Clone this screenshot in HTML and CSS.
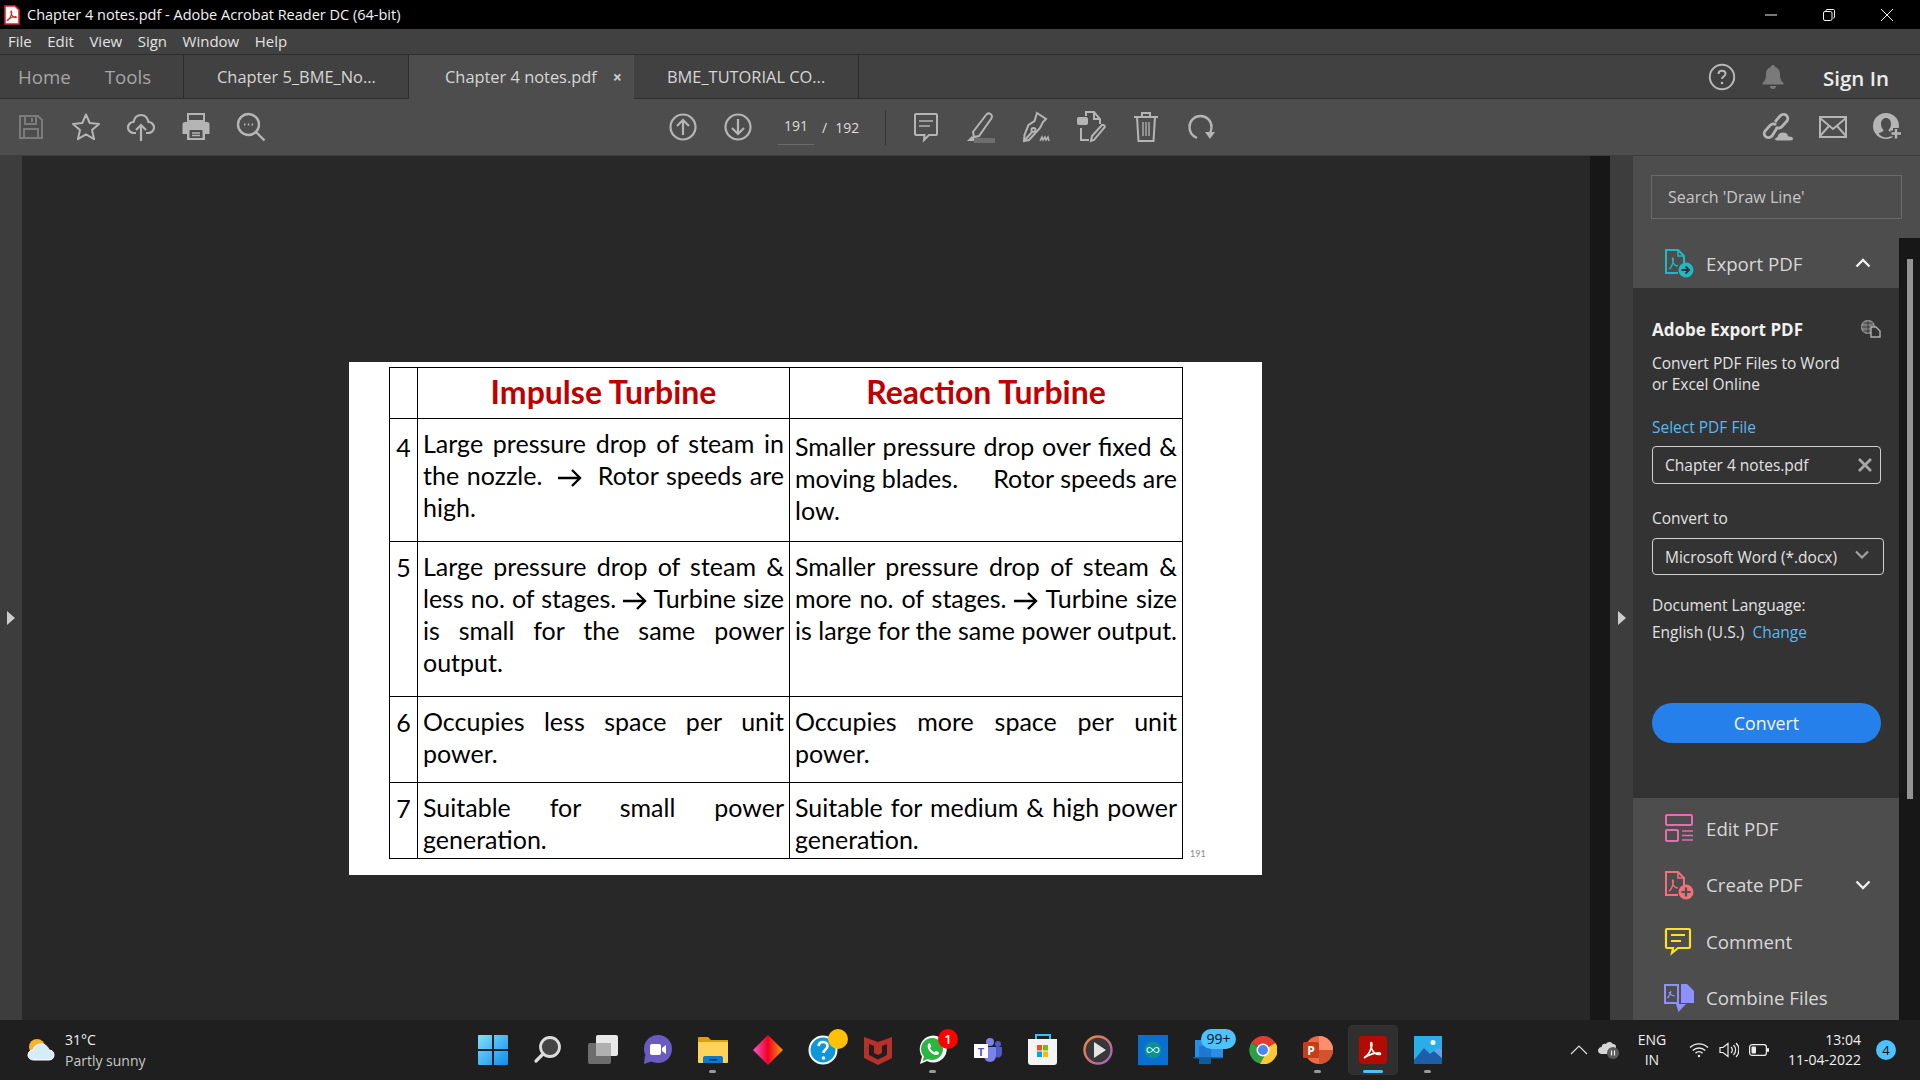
FILE: index.html
```html
<!DOCTYPE html>
<html lang="en">
<head>
<meta charset="utf-8">
<title>Chapter 4 notes.pdf - Adobe Acrobat Reader DC (64-bit)</title>
<link rel="stylesheet" href="styles.css">
</head>
<body>
<div class="app">
  <header class="titlebar">
    <svg class="app-icon" viewBox="0 0 16 20" width="16" height="20"><path d="M1 1h10l4 4v14H1z" fill="#fff" stroke="#e0222a" stroke-width="1.6"/><path d="M3.5 15.5c2-1 3-3.5 4-6.5.4-1.5.3-3-.2-3-.6 0-.5 2 .3 3.6.8 1.800 2 3 4 3 1.200 0 1-1-.4-1-2 0-4.500 1-6.500 2.400-1.400 1-1.800 1.500-1.200 1.500z" fill="none" stroke="#e0222a" stroke-width="1.100"/></svg>
    <span class="title-text">Chapter 4 notes.pdf - Adobe Acrobat Reader DC (64-bit)</span>
    <div class="win-controls">
      <svg width="14" height="14" viewBox="0 0 14 14"><path d="M1 7h12" stroke="#fff" stroke-width="1"/></svg>
      <svg width="14" height="14" viewBox="0 0 14 14"><rect x="1.500" y="3.500" width="8.500" height="9" rx="1.500" fill="none" stroke="#fff"/><path d="M4 3V2.500C4 1.700 4.500 1.500 5 1.500h6.500c.6 0 1 .4 1 1V9c0 .7-.5 1-1.500 1" fill="none" stroke="#fff"/></svg>
      <svg width="14" height="14" viewBox="0 0 14 14"><path d="M1 1l12 12M13 1L1 13" stroke="#fff" stroke-width="1"/></svg>
    </div>
  </header>

  <nav class="menubar">
    <span>File</span><span>Edit</span><span>View</span><span>Sign</span><span>Window</span><span>Help</span>
  </nav>

  <div class="tabbar">
    <div class="tab-home"><span>Home</span><span>Tools</span></div>
    <div class="tab tab-a">Chapter 5_BME_No...</div>
    <div class="tab tab-active">Chapter 4 notes.pdf<span class="tab-close">×</span></div>
    <div class="tab tab-c">BME_TUTORIAL CO...</div>
    <div class="tab-right">
      <svg width="28" height="28" viewBox="0 0 28 28"><circle cx="14" cy="14" r="12.200" fill="none" stroke="#b8b8b8" stroke-width="2"/><path d="M10.500 11c0-2 1.500-3.200 3.500-3.200s3.500 1.200 3.500 3c0 2.700-3.500 2.700-3.500 5.200" fill="none" stroke="#b8b8b8" stroke-width="2"/><circle cx="14" cy="20" r="1.300" fill="#b8b8b8"/></svg>
      <svg width="24" height="26" viewBox="0 0 24 26"><path d="M12 1c1.300 0 2 .9 2 2 3.500 1 5 4 5 7.500 0 4 1 6.500 3.500 8.500v1.500h-21V19C4 17 5 14.500 5 10.500 5 7 6.500 4 10 3c0-1.100.7-2 2-2z" fill="#7a7a7a"/><path d="M9 22h6c0 1.700-1.300 3-3 3s-3-1.300-3-3z" fill="#7a7a7a"/></svg>
      <span class="signin">Sign In</span>
    </div>
  </div>

  <div class="toolbar">
    <div class="tool-group">
      <span class="tool"><svg width="26" height="26" viewBox="0 0 26 26" fill="none" stroke="#7b7b7b" stroke-width="2"><path d="M2 2h18l4 4v18H2z"/><path d="M7 2v8h11V2M14 4v4M6 24v-9h14v9"/></svg></span>
      <span class="tool"><svg width="30" height="30" viewBox="0 0 30 30" fill="none" stroke="#b5b5b5" stroke-width="2"><path d="M15 2.500l3.700 8.500 9.300.9-7 6.100 2.100 9.100-8.100-4.800-8.100 4.800 2.100-9.100-7-6.100 9.300-.9z" stroke-linejoin="round"/></svg></span>
      <span class="tool"><svg width="30" height="30" viewBox="0 0 30 30" fill="none" stroke="#b5b5b5" stroke-width="2.200"><path d="M10 21H8c-3.500 0-6-2.500-6-5.500S4.500 10 7.500 10C8.500 5.500 11.500 3 15 3s6.500 2.500 7.500 7c3 0 5.500 2.500 5.500 5.500S25.500 21 22 21h-2"/><path d="M15 29V13M10 18l5-5 5 5"/></svg></span>
      <span class="tool"><svg width="28" height="28" viewBox="0 0 28 28"><path d="M6 1h16v7H6z" fill="none" stroke="#b5b5b5" stroke-width="2"/><path d="M3 9h22a2.500 2.500 0 0 1 2.500 2.500V21H23v6H5v-6H.5v-9.500A2.500 2.500 0 0 1 3 9z" fill="#b5b5b5"/><path d="M7.500 17h13v8h-13z" fill="#4d4d4d"/><path d="M10 20h8M10 22.500h8" stroke="#b5b5b5" stroke-width="1.500"/></svg></span>
      <span class="tool"><svg width="30" height="30" viewBox="0 0 30 30" fill="none" stroke="#b5b5b5" stroke-width="2.400"><circle cx="12.500" cy="12.500" r="10.500"/><path d="M20 20l8.500 8.500"/><path d="M8 12.500h1.500M11.800 12.500h1.500M15.600 12.500h1.500" stroke-width="2"/></svg></span>
    </div>
    <div class="tool-group nav-group">
      <span class="tool"><svg width="28" height="32" viewBox="0 0 28 32" fill="none" stroke="#b5b5b5" stroke-width="2.200"><circle cx="14" cy="16" r="12.500"/><path d="M14 24V9M8 15l6-6 6 6"/></svg></span>
      <span class="tool"><svg width="28" height="32" viewBox="0 0 28 32" fill="none" stroke="#b5b5b5" stroke-width="2.200"><circle cx="14" cy="16" r="12.500"/><path d="M14 8v15M8 17l6 6 6-6"/></svg></span>
      <div class="pager"><span class="page-now">191</span><span class="page-sep">/</span><span>192</span></div>
      <span class="divider"></span>
    </div>
    <div class="tool-group edit-group">
      <span class="tool"><svg width="26" height="32" viewBox="0 0 26 32" fill="none" stroke="#b5b5b5" stroke-width="2"><path d="M3 3h20a2 2 0 0 1 1 1v19a1 1 0 0 1-1 1h-7l-5 5 .5-5H3a1 1 0 0 1-1-1V4a1 1 0 0 1 1-1z"/><path d="M6 10h14M6 15h11" stroke-width="1.600"/></svg></span>
      <span class="tool"><svg width="30" height="32" viewBox="0 0 30 32" fill="none" stroke="#b5b5b5" stroke-width="2"><path d="M7 21L20 4c1.500-2 3-2 4.500-1s2 2.500.8 4.500L13 25l-5 1z"/><path d="M1 30l5-5 3 3-1 2z" fill="#b5b5b5" stroke="none"/><rect x="8" y="27" width="21" height="5" fill="#6e6e6e" stroke="none"/></svg></span>
      <span class="tool"><svg width="30" height="32" viewBox="0 0 30 32" fill="none" stroke="#b5b5b5" stroke-width="2"><path d="M16 2l9 6-3 3-3 6-11 12-5 1 .500-6 4-10 6-4z"/><path d="M3 30l8-9"/><circle cx="12.500" cy="19" r="2" /><path d="M19 30l2-4 1 3 2-3 1 3 2-3 1 4" stroke-width="1.500"/></svg></span>
      <span class="tool"><svg width="30" height="34" viewBox="0 0 30 34" fill="none" stroke="#b5b5b5" stroke-width="2"><path d="M10 6V2h8l6 7v5"/><path d="M18 2v7h6"/><rect x="1" y="7" width="11" height="8" rx="2" fill="#b5b5b5" stroke="none"/><path d="M5 18v12h8"/><path d="M15 31l1-5 10-11c1-1 3.500 1 2.500 2.500L18 30z"/></svg></span>
      <span class="tool"><svg width="26" height="32" viewBox="0 0 26 32" fill="none" stroke="#b5b5b5" stroke-width="2"><path d="M1 6h24M9 6V2h8v4"/><path d="M4 6l1.500 24h15L22 6"/><path d="M10 11v14M13 11v14M16 11v14" stroke-width="1.300"/></svg></span>
      <span class="tool"><svg width="30" height="32" viewBox="0 0 30 32" fill="none" stroke="#b5b5b5" stroke-width="2.400"><path d="M11 27C6 25 3.500 21 3.500 16c0-6.500 5-11 11-11s11 4.500 11 11c0 2.500-.5 4-1.500 6"/><path d="M19 21h10l-5 7z" fill="#b5b5b5" stroke="none"/></svg></span>
    </div>
    <div class="tool-group right-group">
      <span class="tool"><svg width="32" height="30" viewBox="0 0 32 30" fill="none" stroke="#b5b5b5" stroke-width="2.800"><path d="M13 10l5-6c2-2 5-2 6.500-.5s2 4 0 6l-4.500 5c-2 2-4.500 2-6 .5"/><path d="M15 16l-5 8c-2 2-5 2-6.500.5s-2-4 0-6l4.500-5c2-2 4.500-2 6-.5"/><path d="M15 29c-3 0-3-4 0-4 .5-3 3-5 6-5 3.500 0 5 2 5.500 4 3 0 5 1 5 2.500S30 29 28 29z" fill="#b5b5b5" stroke="#4d4d4d" stroke-width="1"/></svg></span>
      <span class="tool"><svg width="28" height="22" viewBox="0 0 28 22" fill="none" stroke="#b5b5b5" stroke-width="2"><rect x="1" y="1" width="26" height="20"/><path d="M1 2l13 11L27 2M1 20l9-10M27 20l-9-10"/></svg></span>
      <span class="tool"><svg width="30" height="28" viewBox="0 0 30 28"><circle cx="13" cy="13" r="13" fill="#b5b5b5"/><path d="M13 5c3 0 5 2.500 5 6 0 2.500-1 4.500-2.500 6 0 1.500 2 2 5 3.500-2 2.500-5 4-7.500 4s-5.500-1.500-7.500-4c3-1.500 5-2 5-3.500-1.500-1.500-2.500-3.500-2.500-6 0-3.500 2-6 5-6z" fill="#4d4d4d"/><path d="M23 15v11M17.500 20.500h11" stroke="#4d4d4d" stroke-width="6"/><path d="M23 16v9.500M18.500 20.500H28" stroke="#b5b5b5" stroke-width="2.400"/></svg></span>
    </div>
  </div>

  <main class="workspace">
    <div class="side-strip"><span class="arrow"></span></div>
    <section class="doc-area">
      <article class="page">
        <table class="sheet">
          <colgroup><col class="col-n"><col class="col-l"><col class="col-r"></colgroup>
          <tr class="row-h">
            <td></td>
            <td class="head">Impulse Turbine</td>
            <td class="head">Reaction Turbine</td>
          </tr>
          <tr class="row-4">
            <td class="num num-low">4</td>
            <td class="txt"><div class="j">Large pressure drop of steam in</div><div class="j">the nozzle. <svg class="arr arr-wide" viewBox="0 0 24 18"><path d="M0 9h22M14 1l8 8-8 8" fill="none" stroke="#000" stroke-width="2.400"/></svg> Rotor speeds are</div><div>high.</div></td>
            <td class="txt low"><div class="j">Smaller pressure drop over fixed &amp;</div><div class="j">moving blades. <span class="gap"></span> Rotor speeds are</div><div>low.</div></td>
          </tr>
          <tr class="row-5">
            <td class="num">5</td>
            <td class="txt"><div class="j">Large pressure drop of steam &amp;</div><div class="j">less no. of stages. <svg class="arr" viewBox="0 0 24 18"><path d="M0 9h22M14 1l8 8-8 8" fill="none" stroke="#000" stroke-width="2.400"/></svg> Turbine size</div><div class="j">is small for the same power</div><div>output.</div></td>
            <td class="txt"><div class="j">Smaller pressure drop of steam &amp;</div><div class="j">more no. of stages. <svg class="arr" viewBox="0 0 24 18"><path d="M0 9h22M14 1l8 8-8 8" fill="none" stroke="#000" stroke-width="2.400"/></svg> Turbine size</div><div class="j">is large for the same power output.</div></td>
          </tr>
          <tr class="row-6">
            <td class="num">6</td>
            <td class="txt"><div class="j">Occupies less space per unit</div><div>power.</div></td>
            <td class="txt"><div class="j">Occupies more space per unit</div><div>power.</div></td>
          </tr>
          <tr class="row-7">
            <td class="num">7</td>
            <td class="txt"><div class="j">Suitable for small power</div><div>generation.</div></td>
            <td class="txt"><div class="j">Suitable for medium &amp; high power</div><div>generation.</div></td>
          </tr>
        </table>
        <span class="page-no">191</span>
      </article>
    </section>
    <div class="doc-track"></div>
    <div class="panel-strip"><span class="arrow"></span></div>
    <aside class="panel">
      <div class="panel-search"><div class="search-box">Search 'Draw Line'</div></div>
      <div class="panel-body">
        <div class="panel-col">
          <div class="tool-row export-row">
            <svg width="30" height="30" viewBox="0 0 30 30" fill="none" stroke="#1fb9c4" stroke-width="2"><path d="M14 25H2V2h12l6 6v7"/><path d="M14 2v6h6" stroke-width="1.600"/><path d="M5 21c2-1 3-3 4-7 .4-2 .3-4-.2-4-.6 0-.4 3 .5 5 1 2 2.500 3 4.500 3" stroke-width="1.300"/><circle cx="22" cy="22" r="7.500" fill="#1fb9c4" stroke="none"/><path d="M17.500 22h7M21.500 18.500l3.500 3.500-3.500 3.500" stroke="#333" stroke-width="2"/></svg>
            <span class="tool-label">Export PDF</span>
            <svg class="chev" width="16" height="10" viewBox="0 0 16 10"><path d="M1.500 8.500L8 2l6.500 6.500" fill="none" stroke="#eee" stroke-width="2.400"/></svg>
          </div>
          <div class="export-card">
            <div class="card-head"><strong>Adobe Export PDF</strong>
              <svg width="20" height="18" viewBox="0 0 20 18" fill="none" stroke="#9a9a9a" stroke-width="1.200"><circle cx="7" cy="7" r="6.500" fill="#7a7a7a"/><path d="M.5 7h13M7 .5v13M2.500 3h9M2.500 11h9" stroke="#333" stroke-width=".8"/><path d="M10 7h5l4 4v6h-9z" fill="#333" stroke="#b0b0b0" stroke-width="1.400"/></svg>
            </div>
            <p class="card-text">Convert PDF Files to Word<br>or Excel Online</p>
            <div class="blue sel-label">Select PDF File</div>
            <div class="field field-file"><span>Chapter 4 notes.pdf</span><svg width="14" height="14" viewBox="0 0 14 14"><path d="M1 1l12 12M13 1L1 13" stroke="#a8a8a8" stroke-width="2.800"/></svg></div>
            <div class="conv-label">Convert to</div>
            <div class="field field-select"><span>Microsoft Word (*.docx)</span><svg width="14" height="9" viewBox="0 0 14 9"><path d="M1 1.500l6 6 6-6" fill="none" stroke="#a0a0a0" stroke-width="2.200"/></svg></div>
            <div class="lang-label">Document Language:</div>
            <div class="lang-value">English (U.S.) <span class="blue change">Change</span></div>
            <div class="convert-btn">Convert</div>
          </div>
          <div class="tool-list">
            <div class="tool-row">
              <svg width="30" height="30" viewBox="0 0 30 30" fill="none" stroke="#e96bb0" stroke-width="2"><rect x="2" y="2" width="26" height="10" rx="1"/><rect x="2" y="17" width="12" height="11" rx="1"/><path d="M18 18h11M18 22.500h11M18 27h11" stroke-width="1.600"/></svg>
              <span class="tool-label">Edit PDF</span>
            </div>
            <div class="tool-row">
              <svg width="30" height="30" viewBox="0 0 30 30" fill="none" stroke="#f2707a" stroke-width="2"><path d="M14 25H2V2h12l6 6v7"/><path d="M14 2v6h6" stroke-width="1.600"/><path d="M5 21c2-1 3-3 4-7 .4-2 .3-4-.2-4-.6 0-.4 3 .5 5 1 2 2.500 3 4.500 3" stroke-width="1.300"/><circle cx="22" cy="22" r="7.500" fill="#f2707a" stroke="none"/><path d="M22 17.500v9M17.500 22h9" stroke="#4d4d4d" stroke-width="2.200"/></svg>
              <span class="tool-label">Create PDF</span>
              <svg class="chev" width="16" height="10" viewBox="0 0 16 10"><path d="M1.500 1.500L8 8l6.500-6.500" fill="none" stroke="#eee" stroke-width="2.400"/></svg>
            </div>
            <div class="tool-row">
              <svg width="30" height="30" viewBox="0 0 30 30" fill="none" stroke="#fde02a" stroke-width="2.200"><path d="M3 3h22a1 1 0 0 1 1 1v17a1 1 0 0 1-1 1H14l-6 5 1-5H3a1 1 0 0 1-1-1V4a1 1 0 0 1 1-1z"/><path d="M7 9h14M7 15h10"/></svg>
              <span class="tool-label">Comment</span>
            </div>
            <div class="tool-row">
              <svg width="30" height="30" viewBox="0 0 30 30"><path d="M1 2h13v18H1z" fill="none" stroke="#8f8fff" stroke-width="2"/><path d="M3 15c2-1 3-3 4-7M5 9c1 2 3 4 6 4" fill="none" stroke="#8f8fff" stroke-width="1.200"/><path d="M17 1h6l7 7v12H17z" fill="#8f8fff"/><path d="M12 21h5v-6h0l0 6h5l-7.500 8z" fill="#8f8fff"/></svg>
              <span class="tool-label">Combine Files</span>
            </div>
          </div>
        </div>
        <div class="panel-track"><span class="thumb"></span></div>
      </div>
    </aside>
  </main>

  <footer class="taskbar">
    <div class="weather">
      <svg width="28" height="24" viewBox="0 0 28 24"><circle cx="10" cy="9" r="8" fill="#f8b32c"/><path d="M7 22c-3.500 0-6-2-6-5s2.500-5 5-5c1-4 4-6 8-6s7 2.500 8 6c3 0 5 2 5 5s-2 5-5 5z" fill="#d6ecfa" stroke="#fff"/></svg>
      <div class="weather-text"><div>31°C</div><div class="muted">Partly sunny</div></div>
    </div>
    <div class="task-icons">
      <span class="ti"><svg width="30" height="30" viewBox="0 0 30 30"><defs><linearGradient id="w" x1="0" y1="0" x2="1" y2="1"><stop offset="0" stop-color="#7fe0fb"/><stop offset="1" stop-color="#0f8cf0"/></linearGradient></defs><path d="M0 1a1 1 0 0 1 1-1h13v14H0zM16 0h13a1 1 0 0 1 1 1v13H16zM0 16h14v14H1a1 1 0 0 1-1-1zM16 16h14v13a1 1 0 0 1-1 1H16z" fill="url(#w)"/></svg></span>
      <span class="ti"><svg width="30" height="30" viewBox="0 0 30 30"><circle cx="17" cy="12" r="9.500" fill="#444" stroke="#ddd" stroke-width="2.800"/><path d="M10 19l-7 7" stroke="#ddd" stroke-width="3.200" stroke-linecap="round"/></svg></span>
      <span class="ti"><svg width="30" height="30" viewBox="0 0 30 30"><rect x="8" y="0" width="22" height="21" rx="2" fill="#e8e8e8"/><rect x="0" y="8" width="23" height="21" rx="2" fill="#7b7b7b" fill-opacity=".85"/><rect x="8" y="8" width="15" height="13" fill="#b0b0b0"/></svg></span>
      <span class="ti"><svg width="30" height="30" viewBox="0 0 30 30"><circle cx="15" cy="14" r="14" fill="#6a5bc0"/><path d="M2 20l-1 9 9-3z" fill="#6a5bc0"/><rect x="7" y="9" width="11" height="11" rx="2" fill="#fff"/><path d="M19 13l4-3v9l-4-3z" fill="#fff"/></svg></span>
      <span class="ti has-dot"><svg width="30" height="28" viewBox="0 0 30 28"><path d="M0 2a1 1 0 0 1 1-1h9l3 3h17v4H0z" fill="#dca00e"/><path d="M0 6h30v20a1 1 0 0 1-1 1H1a1 1 0 0 1-1-1z" fill="#fdd35a"/><path d="M5 27v-5a2 2 0 0 1 2-2h16a2 2 0 0 1 2 2v5z" fill="#0f78c8"/><rect x="11" y="23" width="8" height="1.500" fill="#062f5a"/></svg></span>
      <span class="ti"><svg width="30" height="30" viewBox="0 0 30 30"><defs><linearGradient id="d" x1="0" x2="1"><stop offset="0" stop-color="#f45ad0"/><stop offset=".5" stop-color="#f20024"/><stop offset="1" stop-color="#f7a000"/></linearGradient></defs><path d="M15 0l15 15-15 15L0 15z" fill="url(#d)"/></svg></span>
      <span class="ti"><svg width="30" height="30" viewBox="0 0 30 30"><circle cx="15" cy="15" r="13.500" fill="#0f97d8" stroke="#fff" stroke-width="2"/><path d="M10.500 11c.5-3 2.500-4 4.500-4 3 0 4.500 2 4.500 4 0 3.500-4 3.500-4 7" fill="none" stroke="#fff" stroke-width="2.600"/><circle cx="15.500" cy="23" r="1.800" fill="#fff"/></svg><i class="badge-dot"></i></span>
      <span class="ti"><svg width="28" height="30" viewBox="0 0 28 30"><path d="M0 2l14 5 14-5v21L14 30 0 23zM5 9v11l9 4.500 9-4.500V9l-5 2v7l-4 2-4-2v-7z" fill="#b8302a" fill-rule="evenodd"/></svg></span>
      <span class="ti has-dot"><svg width="30" height="30" viewBox="0 0 30 30"><path d="M2 29l2-7.500A13.500 13.500 0 1 1 9 26z" fill="#fff"/><path d="M4.500 26.500l1.500-5A11 11 0 1 1 9.500 24z" fill="#2ab640"/><path d="M10 9c1-1 2-1 2.300 0l1 2.500-1.200 1.700c.9 1.800 2.300 3.100 4.200 4l1.600-1.300 2.600 1.200c.7.500.5 1.600-.3 2.400-3 2.500-12.500-3.500-10.200-10.500z" fill="#fff"/></svg><i class="badge-red">1</i></span>
      <span class="ti"><svg width="28" height="24" viewBox="0 0 28 24"><circle cx="16" cy="4" r="4" fill="#7b83eb"/><circle cx="24" cy="6" r="3" fill="#5059c9"/><path d="M10 9h12v9a6 6 0 0 1-12 0z" fill="#7b83eb"/><path d="M22 9h6v7a4 4 0 0 1-6 3z" fill="#5059c9"/><rect x="0" y="6" width="14" height="14" fill="#fff"/><text x="7" y="17.500" class="teams-t">T</text></svg></span>
      <span class="ti"><svg width="30" height="32" viewBox="0 0 30 32"><path d="M8 6V1h14v5" fill="none" stroke="#32c5f4" stroke-width="2"/><path d="M0 5h29v23a3 3 0 0 1-3 3H3a3 3 0 0 1-3-3z" fill="#f4f4f4"/><rect x="9" y="11" width="5" height="5.500" fill="#f25022"/><rect x="15" y="11" width="5" height="5.500" fill="#7fba00"/><rect x="9" y="17.500" width="5" height="5.500" fill="#00a4ef"/><rect x="15" y="17.500" width="5" height="5.500" fill="#ffb900"/></svg></span>
      <span class="ti"><svg width="30" height="30" viewBox="0 0 30 30"><defs><linearGradient id="p" x1="0" y1="0" x2="1" y2="1"><stop offset="0" stop-color="#ef8a3c"/><stop offset="1" stop-color="#a45cc8"/></linearGradient></defs><circle cx="15" cy="15" r="13.500" fill="#383838" stroke="url(#p)" stroke-width="2.400"/><path d="M11 7l12 8-12 8z" fill="#e4e4e4"/></svg></span>
      <span class="ti"><svg width="30" height="30" viewBox="0 0 30 30"><rect width="30" height="30" fill="#0a6fcf"/><circle cx="15" cy="15" r="8.500" fill="#0e8f96"/><path d="M11.500 12.500a2.500 2.500 0 1 0 0 5c3 0 4-5 7-5a2.500 2.500 0 1 1 0 5c-3 0-4-5-7-5z" fill="none" stroke="#cfe" stroke-width="1.200"/></svg></span>
      <span class="ti"><svg width="30" height="28" viewBox="0 0 30 28"><path d="M2 4h28v18H2z" fill="#2a8ee4"/><path d="M6 10h12v12H6z" fill="#1f78cf"/><path d="M0 21h30l-1 1.500H1z" fill="#16609f"/><path d="M6 22h12v6H6z" fill="#125a9e"/></svg><i class="badge-99">99+</i></span>
      <span class="ti"><svg width="28" height="28" viewBox="0 0 28 28"><path d="M14 14L2.500 6.500A14 14 0 0 1 26.500 7z" fill="#e33b2e"/><path d="M2.500 6.500A14 14 0 0 0 11 27.700L17 17z" fill="#2f9e44"/><path d="M26.500 7A14 14 0 0 1 11 27.700L17 17l-3-3z" fill="#fcc934"/><circle cx="14" cy="14" r="6.500" fill="#fff"/><circle cx="14" cy="14" r="5" fill="#4e86f0"/></svg></span>
      <span class="ti has-dot"><svg width="30" height="28" viewBox="0 0 30 28"><circle cx="16" cy="14" r="14" fill="#ed6c47"/><path d="M16 0a14 14 0 0 1 14 14H16z" fill="#ff8f6b"/><path d="M16 14h14a14 14 0 0 1-14 14z" fill="#d35230"/><rect x="0" y="6" width="16" height="16" rx="1.500" fill="#c43e1c"/><text x="8" y="18.500" class="ppt-t">P</text></svg></span>
      <span class="ti is-active"><svg width="28" height="28" viewBox="0 0 28 28"><rect width="28" height="28" rx="3" fill="#b30b00"/><path d="M6 21c3-1.500 5-5 6.500-10 .5-2 .5-4.500-.2-4.500-.8 0-.8 3 .5 6.500 1.500 3.500 4 5.500 7.500 5.500 1.800 0 1.500-1.700-.7-1.700-3.500 0-8 1.300-11.500 3.200-2.400 1.300-3 2.500-2.100 1z" fill="none" stroke="#fff" stroke-width="1.700"/></svg></span>
      <span class="ti has-dot"><svg width="28" height="28" viewBox="0 0 28 28"><rect width="28" height="28" fill="#29aeea"/><circle cx="19" cy="6.500" r="2.500" fill="#fff"/><path d="M0 24l10-12 6 6 4-3 8 7v6H0z" fill="#1d5ea8"/><path d="M16 18l4-3 8 7v-8l-4-2z" fill="#6aa0e8"/></svg></span>
    </div>
    <div class="tray">
      <svg width="18" height="10" viewBox="0 0 18 10"><path d="M1 9l8-8 8 8" fill="none" stroke="#ddd" stroke-width="1.200"/></svg>
      <svg class="t-cloud" width="22" height="18" viewBox="0 0 22 18"><path d="M4 13c-3 0-4-2-4-3.500S1.500 6 3.500 6C4 3 6 2 8 3c1-2.500 5-3 7 0 2 0 3 1 3 3v3l-4 4z" fill="#d5d5d5"/><circle cx="15" cy="12" r="6" fill="#5a5a5a"/><path d="M13.500 9.500v5M16.500 9.500v5" stroke="#eee" stroke-width="1.200"/></svg>
      <div class="lang"><div>ENG</div><div>IN</div></div>
      <svg class="t-wifi" width="20" height="16" viewBox="0 0 20 16" fill="none" stroke="#eee" stroke-width="1.400"><path d="M1 5.500a13 13 0 0 1 18 0M3.800 8.500a9 9 0 0 1 12.400 0M6.500 11.200a5 5 0 0 1 7 0"/><circle cx="10" cy="14" r="1.200" fill="#eee" stroke="none"/></svg>
      <svg class="t-vol" width="20" height="16" viewBox="0 0 20 16" fill="none" stroke="#eee" stroke-width="1.200"><path d="M1 5.500h3L9 1.500v13l-5-4H1z"/><path d="M12 5a4 4 0 0 1 0 6M14.500 3a7 7 0 0 1 0 10M17 1a10 10 0 0 1 0 14"/></svg>
      <svg class="t-bat" width="20" height="12" viewBox="0 0 20 12"><rect x=".6" y=".6" width="16.800" height="10.800" rx="2.500" fill="none" stroke="#eee" stroke-width="1.200"/><rect x="2.500" y="2.500" width="4.500" height="7" rx="1" fill="#eee"/><rect x="18" y="4" width="2" height="4" rx="1" fill="#eee"/></svg>
      <div class="clock"><div>13:04</div><div>11-04-2022</div></div>
      <span class="notif">4</span>
    </div>
  </footer>
</div>
</body>
</html>
```
FILE: styles.css
```css
* { box-sizing: border-box; }
html, body { margin: 0; height: 100%; }
body { font-family: "Open Sans", "Noto Sans", sans-serif; background: #000; overflow: hidden; }
svg { display: block; flex: none; }
.app { width: 1920px; height: 1080px; display: flex; flex-direction: column; overflow: hidden; }

.titlebar { height: 29px; background: #000; color: #f2f2f2; display: flex; align-items: center; padding-left: 4px; font-size: 14.500px; }
.title-text { margin-left: 7px; }
.win-controls { margin-left: auto; display: flex; gap: 44px; padding-right: 26px; }
.win-controls svg { opacity: .95; }

.menubar { height: 26px; background: #414141; color: #e2e2e2; display: flex; align-items: center; font-size: 15px; padding: 0 0 2px 8px; gap: 15.500px; border-bottom: 1px solid #2d2d2d; }

.tabbar { height: 44px; background: #414141; display: flex; align-items: stretch; border-bottom: 1px solid #2d2d2d; color: #d6d6d6; font-size: 16.400px; }
.tab-home { width: 184px; display: flex; align-items: center; gap: 34px; padding-left: 18px; font-size: 18.700px; color: #a5a5a5; border-right: 1px solid #2d2d2d; }
.tab { display: flex; align-items: center; }
.tab-a { width: 225px; padding-left: 33px; border-right: 1px solid #2d2d2d; }
.tab-active { width: 225px; padding: 0 0 1px 36px; background: #4d4d4d; margin-bottom: -1px; }
.tab-close { margin-left: 16px; color: #ccc; font-size: 16px; font-weight: 700; }
.tab-c { width: 225px; padding-left: 33px; border-right: 1px solid #2d2d2d; }
.tab-right { margin-left: auto; display: flex; align-items: center; gap: 25px; padding-right: 31px; }
.signin { font-size: 20.500px; font-weight: 600; color: #ececec; margin-left: 13px; margin-top: 3px; }

.toolbar { height: 57px; background: #4d4d4d; display: flex; align-items: center; padding-left: 3px; border-bottom: 1px solid #3d3d3d; }
.tool-group { display: flex; align-items: center; }
.tool { width: 55px; display: flex; justify-content: center; }
.nav-group { margin-left: 377px; }
.pager { width: 92px; margin-left: 13px; display: flex; align-items: center; color: #ddd; font-size: 14px; }
.page-now { width: 36px; text-align: center; line-height: 32px; height: 36px; border-bottom: 1px solid #6a6a6a; padding-top: 1px; }
.page-sep { margin: 0 8px 0 8px; }
.divider { width: 1px; height: 35px; background: #333; margin-left: 15px; }
.edit-group { margin-left: 12px; }
.right-group { margin-left: auto; padding-right: 5px; }

.workspace { flex: 1; min-height: 0; display: flex; overflow: hidden; }
.side-strip { width: 22px; background: #3d3d3d; display: flex; align-items: center; justify-content: center; padding-top: 60px; }
.panel-strip { width: 23px; background: #3d3d3d; display: flex; align-items: center; justify-content: center; padding-top: 60px; }
.arrow { width: 0; height: 0; border-left: 8px solid #ccc; border-top: 7px solid transparent; border-bottom: 7px solid transparent; }
.doc-area { width: 1568px; background: #282828; padding: 206px 1px 0 0; display: flex; justify-content: center; align-items: flex-start; }
.doc-track { width: 20px; background: #171717; }

.page { width: 913px; height: 513px; background: #fff; padding: 6px 0 16px 40px; display: flex; align-items: flex-end; }
.sheet { width: 794px; table-layout: fixed; border-collapse: collapse; font-family: Lato, "Noto Sans", sans-serif; font-size: 25px; line-height: 32px; color: #000; }
.sheet td { border: 1px solid #000; padding: 0; vertical-align: top; }
.col-n { width: 28px; }
.col-l { width: 372px; }
.row-h { height: 51px; }
.row-4 { height: 123px; }
.row-5 { height: 155px; }
.row-6 { height: 86px; }
.row-7 { height: 76px; }
.sheet td.head { color: #c00000; font-weight: 700; font-size: 32px; text-align: center; vertical-align: middle; padding-bottom: 2px; }
.sheet td.num { text-align: center; padding-top: 9px; }
.sheet td.num-low { padding-top: 12px; }
.sheet td.txt { padding: 8px 5px 0; }
.sheet td.low { padding-top: 11px; }
.j { text-align: justify; text-align-last: justify; white-space: nowrap; }
.arr { display: inline-block; width: 24px; height: 18px; vertical-align: -2px; }
.arr-wide { margin: 0 8px; }
.gap { display: inline-block; width: 22px; }
.page-no { font-family: Lato, sans-serif; font-size: 9px; color: #888; margin: 0 0 -2px 7px; line-height: 14px; }

.panel { flex: 1; min-width: 0; background: #4d4d4d; display: flex; flex-direction: column; color: #e2e2e2; font-size: 15.500px; }
.panel-search { height: 82px; padding: 19px 18px 0 18px; }
.search-box { height: 44px; border: 1px solid #6a6a6a; padding-left: 16px; display: flex; align-items: center; color: #c8c8c8; font-size: 16px; }
.panel-body { flex: 1; min-height: 0; display: flex; overflow: hidden; }
.panel-col { width: 266px; }
.panel-track { width: 21px; background: #171717; padding: 21px 0 0 8px; }
.thumb { display: block; width: 6px; height: 540px; background: #939393; }
.tool-row { height: 56.500px; display: flex; align-items: center; padding-left: 31px; }
.tool-label { margin-left: 12px; font-size: 18.700px; color: #d8d8d8; }
.chev { margin-left: auto; margin-right: 28px; }
.export-row { height: 50px; }
.export-card { height: 510px; background: #333; padding: 26px 18px 0 19px; }
.card-head { display: flex; align-items: center; justify-content: space-between; height: 30px; font-size: 17px; color: #f0f0f0; }
.card-text { margin: 9px 0 0; line-height: 21px; }
.blue { color: #5ab9f2; }
.sel-label { margin-top: 22px; line-height: 21px; }
.field { border: 1px solid #d0d0d0; border-radius: 4px; display: flex; align-items: center; justify-content: space-between; padding: 0 8px 0 12px; }
.field-file { height: 38px; margin-top: 8px; }
.conv-label { margin-top: 24px; line-height: 21px; }
.field-select { height: 37px; margin: 9px -3px 0 0; padding-right: 14px; }
.field-select svg { margin-top: -4px; }
.lang-label { margin-top: 20px; line-height: 21px; }
.lang-value { margin-top: 6px; line-height: 21px; }
.change { margin-left: 4px; }
.convert-btn { margin-top: 60px; height: 40px; border-radius: 20px; background: #2680eb; color: #f4f4f4; display: flex; align-items: center; justify-content: center; font-size: 17.800px; }
.tool-list { padding-top: 2px; }

.taskbar { height: 60px; background: #1f1f1f; display: grid; grid-template-columns: 1fr auto 1fr; align-items: center; color: #f0f0f0; font-size: 14px; }
.weather { display: flex; align-items: center; padding-left: 27px; gap: 10px; }
.weather-text { line-height: 21px; }
.muted { color: #c8c8c8; }
.task-icons { display: flex; height: 60px; align-items: center; }
.ti { width: 55px; height: 50px; position: relative; display: flex; align-items: center; justify-content: center; }
.has-dot::after, .is-active::after { content: ""; position: absolute; left: 24px; bottom: 2px; width: 7px; height: 3px; border-radius: 2px; background: #9a9a9a; }
.is-active { background: #2f2f2f; border-radius: 5px; width: 50px; margin: 0 2.500px; box-shadow: inset 0 0 0 1px #333; }
.is-active::after { left: 15px; width: 20px; background: #4cc2ff; }
.badge-dot { position: absolute; left: 33px; top: 4px; width: 20px; height: 20px; border-radius: 50%; background: #ffc107; }
.badge-red { position: absolute; left: 33px; top: 4px; width: 20px; height: 20px; border-radius: 50%; background: #f00; color: #fff; font-style: normal; font-size: 13px; font-weight: 600; text-align: center; line-height: 20px; }
.badge-99 { position: absolute; left: 21px; top: 4px; width: 35px; height: 20px; border-radius: 10px; background: #4cc2ff; color: #111; font-style: normal; font-size: 14px; text-align: center; line-height: 20px; }
.teams-t { font: 700 11px "Open Sans", sans-serif; fill: #4b53bc; text-anchor: middle; }
.ppt-t { font: 700 12px "Open Sans", sans-serif; fill: #fff; text-anchor: middle; }
.tray { display: flex; align-items: center; justify-content: flex-end; padding-right: 24px; }
.t-cloud { margin-left: 10px; }
.lang { text-align: center; line-height: 20px; margin-left: 15px; width: 34px; }
.t-wifi { margin-left: 20px; }
.t-vol { margin-left: 10px; }
.t-bat { margin-left: 10px; }
.clock { text-align: right; line-height: 20px; margin-left: 19px; }
.notif { width: 20px; height: 20px; border-radius: 50%; background: #4cc2ff; color: #111; text-align: center; line-height: 20px; font-size: 13px; margin-left: 15px; }
```
